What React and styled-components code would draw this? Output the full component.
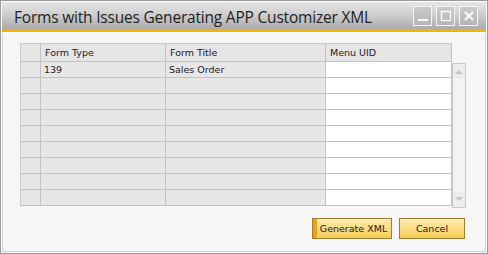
import React from "react";
import styled, { createGlobalStyle } from "styled-components";

const GlobalStyle = createGlobalStyle`
    html, body {
        margin: 0;
        padding: 0;
        background: #ffffff;
    }
`;

const Window = styled.div`
    width: 488px;
    height: 254px;
    box-sizing: border-box;
    border: 1px solid #9a9a9a;
    background: #fdfdfd;
    padding: 1px;
    display: flex;
    flex-direction: column;
`;

const TitleBar = styled.div`
    height: 27px;
    flex: none;
    display: flex;
    align-items: center;
    justify-content: space-between;
    padding: 0 8px 0 12px;
    background: linear-gradient(#e6e6e6 0%, #cfcfcf 45%, #ababab 100%);
    border-bottom: 3px solid #f2b400;
`;

const Title = styled.div`
    font-family: "Open Sans", "DejaVu Sans", sans-serif;
    font-size: 15.5px;
    color: #1e1e1e;
    letter-spacing: -0.2px;
    padding-top: 2px;
`;

const Controls = styled.div`
    display: flex;
    gap: 4px;
    margin-top: 1px;
`;

const CtrlButton = styled.div`
    width: 17px;
    height: 18px;
    border: 1px solid #f4f4f4;
    background: linear-gradient(#cbcbcb, #b5b5b5);
    display: flex;
    align-items: center;
    justify-content: center;
`;

const Body = styled.div`
    flex: 1;
    display: flex;
    flex-direction: column;
    background: #f6f6f6;
    border: 1px solid #d4d4d4;
    border-top: none;
    margin-top: 1px;
    padding: 10px 19px 0 17px;
`;

const GridWrap = styled.div`
    display: flex;
    align-items: flex-start;
`;

const Table = styled.div`
    display: grid;
    grid-template-columns: 20px 125px 160px 126px;
    grid-template-rows: 18px;
    grid-auto-rows: 16px;
    border-top: 1px solid #c9c9c9;
    border-left: 1px solid #c9c9c9;
`;

const Cell = styled.div`
    box-sizing: border-box;
    border-right: 1px solid #c2c2c2;
    border-bottom: 1px solid #c2c2c2;
    background: ${p => (p.$white ? "#ffffff" : p.$head ? "#e5e5e5" : "#e7e7e7")};
    font-family: "DejaVu Sans", "Liberation Sans", sans-serif;
    font-size: 9.5px;
    line-height: 12px;
    color: #222;
    padding: ${p => (p.$head ? "3px 0 0 4px" : "2px 0 0 3px")};
    white-space: nowrap;
    overflow: hidden;
`;

const Scrollbar = styled.div`
    width: 15px;
    height: 143px;
    margin-top: 20px;
    border: 1px solid #c8c8c8;
    background: #f3f3f3;
    display: flex;
    flex-direction: column;
    justify-content: space-between;
`;

const Arrow = styled.div`
    height: 15px;
    display: flex;
    align-items: center;
    justify-content: center;
    background: #ececec;
`;

const Footer = styled.div`
    display: flex;
    justify-content: flex-end;
    gap: 7px;
    margin-top: 10px;
    padding-right: 1px;
`;

const Button = styled.button`
    height: 21px;
    width: ${p => p.$w}px;
    box-sizing: border-box;
    border: 1px solid #9c8030;
    background: ${p =>
        p.$primary
            ? "linear-gradient(90deg, #f0a020 0 4px, transparent 4px), linear-gradient(#fdebb0, #f6cd55)"
            : "linear-gradient(#fdebb0, #f6cd55)"};
    font-family: "DejaVu Sans", "Liberation Sans", sans-serif;
    font-size: 9.5px;
    color: #222;
    padding: ${p => (p.$primary ? "0 0 0 3px" : "0")};
    cursor: pointer;
`;

const columns = ["", "Form Type", "Form Title", "Menu UID"];
const rows = [["", "139", "Sales Order", ""]];
while (rows.length < 9) rows.push(["", "", "", ""]);

const App = () => {
    return (
        <>
            <GlobalStyle />
            <Window>
                <TitleBar>
                    <Title>Forms with Issues Generating APP Customizer XML</Title>
                    <Controls>
                        <CtrlButton>
                            <svg width="12" height="12" viewBox="0 0 12 12">
                                <rect x="1" y="9" width="10" height="2" fill="#fff" />
                            </svg>
                        </CtrlButton>
                        <CtrlButton>
                            <svg width="12" height="12" viewBox="0 0 12 12">
                                <rect x="1.5" y="1.5" width="9" height="9" fill="none" stroke="#fff" strokeWidth="1.4" />
                            </svg>
                        </CtrlButton>
                        <CtrlButton>
                            <svg width="12" height="12" viewBox="0 0 12 12">
                                <path d="M2 2 L10 10 M10 2 L2 10" stroke="#fff" strokeWidth="2" />
                            </svg>
                        </CtrlButton>
                    </Controls>
                </TitleBar>
                <Body>
                    <GridWrap>
                        <Table>
                            {columns.map((c, i) => (
                                <Cell key={"h" + i} $head>{c}</Cell>
                            ))}
                            {rows.map((r, ri) =>
                                r.map((v, ci) => (
                                    <Cell key={ri + "-" + ci} $white={ci === 3}>{v}</Cell>
                                ))
                            )}
                        </Table>
                        <Scrollbar>
                            <Arrow>
                                <svg width="8" height="5" viewBox="0 0 8 5">
                                    <path d="M0 5 L4 1 L8 5 Z" fill="#c4c4c4" />
                                </svg>
                            </Arrow>
                            <Arrow>
                                <svg width="8" height="5" viewBox="0 0 8 5">
                                    <path d="M0 0 L4 4 L8 0 Z" fill="#c4c4c4" />
                                </svg>
                            </Arrow>
                        </Scrollbar>
                    </GridWrap>
                    <Footer>
                        <Button $primary $w={80}>Generate XML</Button>
                        <Button $w={66}>Cancel</Button>
                    </Footer>
                </Body>
            </Window>
        </>
    );
};

export default App;
